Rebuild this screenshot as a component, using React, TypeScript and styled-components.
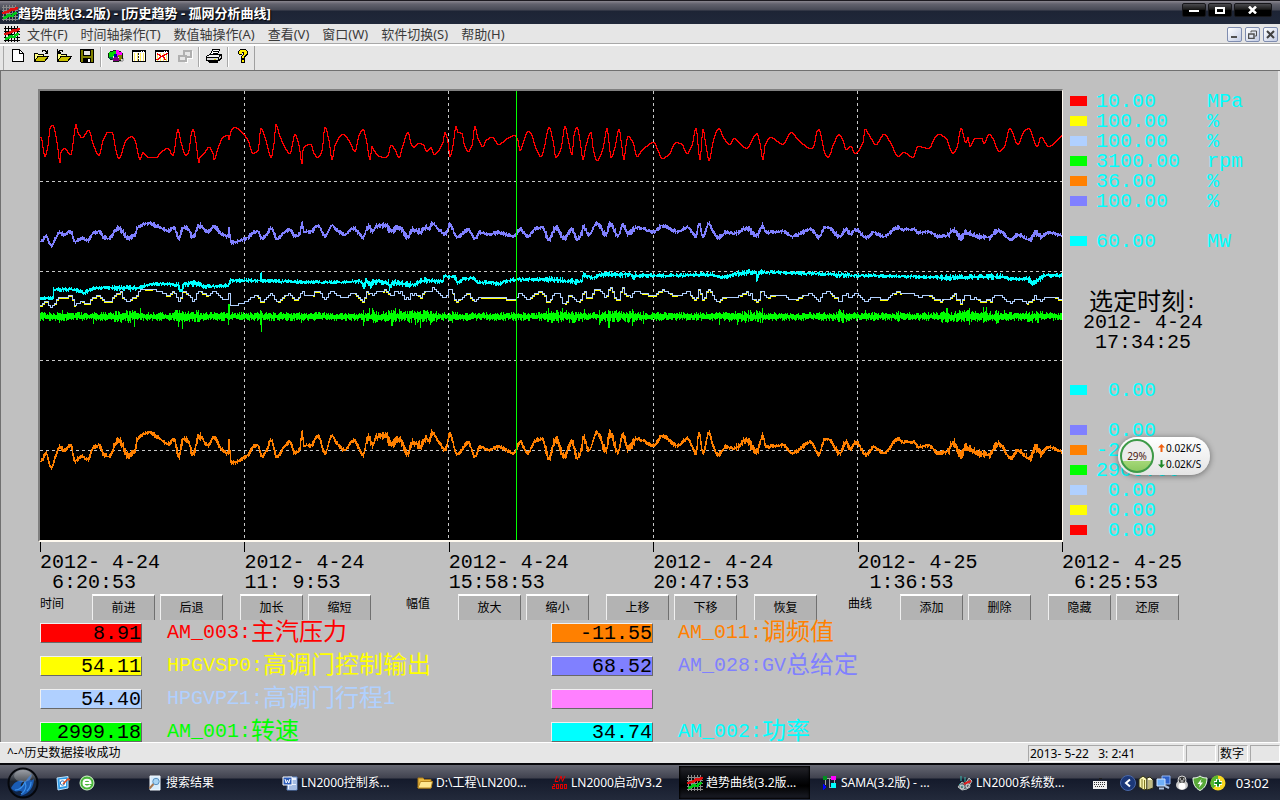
import React from "react";
import styled, { createGlobalStyle, css } from "styled-components";

const GlobalStyle = createGlobalStyle`
  *, *::before, *::after { box-sizing: border-box; }
  html, body { margin: 0; padding: 0; }
  body { background: #c0c0c0; }
  button { font: inherit; color: inherit; padding: 0; margin: 0; border: 0; background: none; }
`;

const uiFont = `"Noto Sans", "Noto Sans CJK SC", sans-serif`;
const dataFont = `"Liberation Mono", "Noto Sans CJK SC", monospace`;

/* ---------- trend data: x, y pairs in plot pixels ---------- */

const PLOT_W = 1022;
const PLOT_H = 449;
const ORIGIN_X = 40;
const ORIGIN_Y = 91;

const pressure = "40,137 44,156 47,145 49,128 52,125 56,142 59,162 60,152 63,148 70,154 73,135 75,124 77,132 81,137 88,130 92,143 98,155 102,140 107,132 111,132 115,150 118,158 125,140 131,136 134,140 139,159 142,152 147,157 155,157 160,152 167,148 172,155 177,129 180,142 185,155 188,150 190,135 192,129 195,142 198,162 199,157 203,153 208,147 212,153 213,159 217,148 222,137 227,135 228,139 230,131 234,127 240,131 247,140 252,153 257,150 260,128 264,137 267,148 270,157 273,143 275,124 278,133 283,145 289,153 294,134 298,145 301,163 302,150 305,145 310,144 313,153 317,157 321,150 324,127 328,140 331,159 334,145 342,134 348,140 354,151 358,135 362,129 365,138 369,159 371,146 373,150 379,156 385,157 387,155 390,145 394,149 398,157 402,145 407,132 410,143 413,147 417,143 422,144 426,151 430,147 433,154 442,142 444,132 447,142 449,156 452,145 455,126 457,132 461,133 463,143 467,151 471,145 474,126 477,138 482,146 485,140 491,137 498,144 505,139 514,135 517,140 519,150 523,140 527,131 530,133 535,148 540,156 543,148 548,127 552,140 555,157 560,148 564,126 567,138 571,154 573,135 576,127 579,140 582,159 585,145 590,132 592,147 596,160 602,148 606,128 608,142 610,157 614,147 618,129 621,147 623,159 625,145 627,136 632,142 636,156 641,150 653,142 657,150 661,158 668,154 675,142 681,144 686,153 691,145 695,128 699,159 702,129 705,145 708,160 712,142 715,132 718,128 722,136 729,144 733,138 740,144 746,148 752,138 756,133 759,143 762,159 764,145 770,137 782,144 790,132 797,139 810,148 813,145 816,131 818,129 821,140 824,153 827,157 833,143 838,134 842,140 845,149 850,146 854,153 862,142 864,129 870,138 875,144 883,134 890,143 897,156 903,152 912,157 917,146 928,148 934,137 938,134 945,138 952,153 956,147 960,128 965,142 967,137 969,146 974,138 981,138 983,143 988,134 992,138 998,151 1003,147 1009,128 1017,144 1023,131 1028,128 1036,146 1040,137 1048,146 1057,139 1062,135";

const setpoint = "40,241 45,236 50,245 55,237 59,232 63,234 70,231 74,241 80,238 87,240 92,233 98,231 103,237 109,238 113,232 118,228 127,237 133,235 137,227 147,223 157,226 167,230 173,227 178,238 182,227 187,228 192,237 198,225 207,231 213,226 220,233 227,236 228,228 230,242 247,237 252,232 257,231 261,238 265,235 270,228 276,238 283,232 289,229 294,236 299,233 301,223 303,231 310,231 317,225 324,236 331,225 335,229 343,234 353,228 362,237 367,226 372,231 375,226 385,225 390,231 398,227 407,236 411,229 420,231 425,227 429,228 431,223 437,228 444,234 449,224 456,237 462,233 467,229 474,238 479,232 487,234 498,232 513,236 519,229 527,236 533,229 541,227 548,239 555,227 563,238 571,229 576,239 581,233 582,226 588,234 596,223 605,234 609,223 617,235 622,224 627,233 636,227 653,231 661,225 676,231 687,227 695,236 698,223 702,236 708,223 712,231 717,237 725,232 733,233 745,228 756,235 762,225 765,232 782,231 791,236 810,229 818,237 823,228 827,227 839,236 845,229 850,233 855,229 865,237 873,232 883,236 897,227 902,229 912,229 918,232 928,231 937,236 947,235 952,229 960,237 965,232 973,235 987,237 998,230 1010,239 1017,234 1027,239 1030,239 1034,232 1040,236 1047,232 1062,235";

const power = "40,298 52,297 53,289 73,289 82,292 93,288 110,287 133,288 145,285 157,283 177,285 180,291 183,284 197,283 203,286 227,285 230,280 259,280 260,273 261,280 290,281 330,282 360,281 363,287 365,281 370,285 373,281 387,282 389,287 391,282 413,284 423,280 442,281 443,276 453,276 457,282 463,278 472,278 477,282 492,282 498,284 503,281 520,279 547,279 570,281 581,281 582,275 593,277 598,274 630,274 632,278 634,275 670,275 710,274 722,277 737,273 755,272 756,278 759,272 810,273 857,275 910,276 943,277 1000,276 1012,279 1027,278 1031,282 1040,278 1043,275 1062,275";

/* x, top, bottom of the single excursions of the speed signal */
const speedSpikes: Array<[number, number, number]> = [
  [59, 314, 323], [62, 310, 318], [93, 314, 324], [115, 311, 322], [134, 313, 327], [140, 308, 318],
  [178, 313, 327], [182, 314, 329], [198, 310, 322], [228, 304, 325], [229, 304, 318], [260, 310, 325],
  [261, 311, 332], [301, 313, 323], [363, 312, 326], [369, 308, 318], [372, 308, 320], [391, 310, 326],
  [392, 313, 326], [395, 308, 322], [399, 309, 318], [415, 312, 325], [420, 313, 328], [430, 311, 325],
  [436, 311, 322], [452, 311, 323], [548, 308, 322], [557, 310, 318], [562, 308, 320], [584, 309, 318],
  [599, 310, 325], [608, 311, 328], [609, 311, 328], [632, 309, 326], [643, 311, 324], [719, 312, 325],
  [729, 313, 322], [737, 313, 325], [748, 310, 322], [750, 310, 320], [760, 313, 323], [762, 308, 316],
  [839, 309, 322], [843, 311, 323], [865, 310, 318], [898, 311, 322], [946, 308, 322], [947, 308, 320],
  [969, 308, 325], [983, 307, 320], [986, 307, 322], [996, 311, 324], [998, 311, 323], [1004, 310, 318], [1032, 311, 322],
];

const noisyZones: Array<[number, number]> = [
  [113, 136], [175, 200], [363, 432], [545, 585], [600, 635], [735, 762], [836, 848], [940, 1000], [1026, 1042],
];

const inZone = (x: number) => noisyZones.some(([a, b]) => x >= a && x <= b);

const hash = (n: number) => {
  const s = Math.sin(n * 127.1 + 311.7) * 43758.5453;
  return s - Math.floor(s);
};

type Point = [number, number];

const parse = (text: string): Point[] =>
  text.split(" ").map((pair) => pair.split(",").map(Number) as Point);

/* monotone cubic interpolation, one value per plot column */
const sample = (points: Point[]): number[] => {
  const n = points.length;
  const slope = points.slice(1).map((p, i) => (p[1] - points[i][1]) / (p[0] - points[i][0]));
  const tangent = points.map((_, i) => {
    if (i === 0 || i === n - 1) return 0;
    const a = slope[i - 1];
    const b = slope[i];
    return a * b <= 0 ? 0 : (2 * a * b) / (a + b);
  });
  const out: number[] = [];
  let i = 0;
  for (let x = 0; x <= PLOT_W; x++) {
    const ax = x + ORIGIN_X;
    while (i < n - 2 && points[i + 1][0] < ax) i++;
    const [x0, y0] = points[i];
    const [x1, y1] = points[i + 1];
    const h = x1 - x0;
    const t = Math.min(1, (ax - x0) / h);
    const t2 = t * t;
    const t3 = t2 * t;
    out.push(
      y0 * (2 * t3 - 3 * t2 + 1) +
        tangent[i] * h * (t3 - 2 * t2 + t) +
        y1 * (3 * t2 - 2 * t3) +
        tangent[i + 1] * h * (t3 - t2) -
        ORIGIN_Y
    );
  }
  return out;
};

/* horizontal run per pixel joined by vertical risers */
const toStepPath = (ys: number[]) => {
  let d = "";
  let last = NaN;
  ys.forEach((raw, x) => {
    const y = Math.round(raw);
    if (x === 0) d += `M0 ${y + 0.5}`;
    else if (y !== last) d += `H${x + 0.5}V${y + 0.5}`;
    last = y;
  });
  return `${d}H${PLOT_W}`;
};

/* one vertical bar per column, reaching back to the column before it */
const toBarPath = (ys: number[], seed: number, quiet: number, loud: number) => {
  let d = "";
  for (let x = 0; x < PLOT_W; x++) {
    const spread = inZone(x + ORIGIN_X) ? loud : quiet;
    const prev = ys[Math.max(0, x - 1)];
    const top = Math.round(Math.min(ys[x], prev) - hash(x + seed) * spread);
    const bottom = Math.round(Math.max(ys[x], prev) + 1 + hash(x * 2 + seed) * spread);
    d += `M${x + 0.5} ${top}V${bottom}`;
  }
  return d;
};

const jitter = (ys: number[], seed: number, quiet: number, loud: number) =>
  ys.map((y, x) => y + (hash(x + seed) - 0.5) * (inZone(x + ORIGIN_X) ? loud : quiet));

const quantise = (ys: number[], step: number, run: number) =>
  ys.map((_, x) => Math.round(ys[Math.floor(x / run) * run] / step) * step);

const pressurePath = toStepPath(sample(parse(pressure)));
const base = sample(parse(setpoint));
const setpointPath = toBarPath(base, 17, 2, 3);
const freqPath = toBarPath(base.map((y) => 341 + (y - 132) * 1.6), 17, 2, 4);
const valve = quantise(jitter(base.map((y) => 197 + (y - 132) * 0.9), 31, 0, 4), 2, 2);
const valvePosPath = toStepPath(valve);
const valveOutPath = toStepPath(valve.map((y, x) => y + (hash(Math.floor(x / 7)) > 0.6 ? 1 : 0)));
const powerPath = toBarPath(sample(parse(power)), 41, 2, 3);

const speedPath = (() => {
  let d = "";
  for (let x = 0; x < PLOT_W; x++) {
    const amp = inZone(x + ORIGIN_X) ? 5 : 3;
    const top = Math.round(225 - 1 - hash(x * 2 + 5) * amp);
    const bottom = Math.round(225 + 2 + hash(x * 3 + 9) * amp);
    d += `M${x + 0.5} ${top}V${bottom}`;
  }
  speedSpikes.forEach(([x, a, b]) => {
    d += `M${x - ORIGIN_X + 0.5} ${a - ORIGIN_Y}V${b - ORIGIN_Y}`;
  });
  return d;
})();

/* ---------- window frame ---------- */

const Screen = styled.div`
  display: flex;
  flex-direction: column;
  height: 100vh;
  overflow: hidden;
  font: 12px/16px ${uiFont};
  color: #000;
  background: #e6e6e6;
`;

const TitleBar = styled.header`
  display: flex;
  align-items: center;
  height: 24px;
  padding: 0 8px 0 2px;
  border-top: 1px solid #1c1a20;
  background: linear-gradient(#8a8790 0, #62626d 3px, #474955 9px, #1d2435 10px, #20283a 100%);
  color: #fff;
`;

const Title = styled.h1`
  flex: 1;
  margin: 0;
  font: bold 13px/20px ${uiFont};
  text-shadow: 1px 1px 1px #000;
`;

const CaptionGroup = styled.div`
  display: flex;
  align-self: flex-start;
  gap: 2px;
  padding-top: 2px;
`;

const CaptionButton = styled.button<{ $wide?: boolean }>`
  display: flex;
  align-items: center;
  justify-content: center;
  width: ${(p) => (p.$wide ? 38 : 24)}px;
  height: 14px;
  border: 1px solid #16161a;
  border-radius: 2px;
  background: linear-gradient(#4a4a4e, #1a1a1a 45%, #000 50%);
`;

const MenuBar = styled.nav`
  display: flex;
  align-items: center;
  height: 20px;
  padding: 0 2px 0 4px;
  color: #3a3a3a;
`;

const MenuList = styled.div`
  display: flex;
  flex: 1;
  gap: 13px;
  padding-left: 7px;
  font-size: 13px;
`;

const MenuItem = styled.button`
  white-space: nowrap;
`;

const MdiGroup = styled.div`
  display: flex;
  gap: 3px;
`;

const MdiButton = styled.button`
  display: flex;
  align-items: center;
  justify-content: center;
  width: 15px;
  height: 15px;
  border: 1px solid #7f8db0;
  border-radius: 2px;
  background: linear-gradient(135deg, #fff, #c3cce4);
`;

const ToolBar = styled.div`
  display: flex;
  align-items: center;
  height: 26px;
  border-top: 2px solid #fff;
  box-shadow: 0 -1px 0 #a8a8a8;
`;

const ToolStrip = styled.div`
  display: flex;
  align-items: flex-start;
  height: 24px;
  margin-left: 3px;
  padding-left: 2px;
  border-left: 1px solid #a8a8a8;
  border-right: 1px solid #a0a0a0;
`;

const ToolButton = styled.button`
  display: flex;
  align-items: center;
  justify-content: center;
  width: 23px;
  height: 20px;
`;

const ToolSeparator = styled.span`
  width: 2px;
  height: 20px;
  margin: 1px 2px;
  border-left: 1px solid #a8a8a8;
  border-right: 1px solid #fff;
`;

/* ---------- workspace ---------- */

const Workspace = styled.main`
  flex: 1;
  min-height: 0;
  overflow: hidden;
  border: solid #707070;
  border-width: 1px 0 0 1px;
  box-shadow: inset -2px 0 0 #e6e6e6;
  background: #c0c0c0;
`;

const TrendRow = styled.div`
  display: grid;
  grid-template-columns: minmax(0, 1fr) 217px;
  padding: 18px 0 0 37px;
`;

const Plot = styled.div`
  border: solid;
  border-width: 2px 1px 2px 2px;
  border-color: #808080 #fffaf0 #fffaf0 #808080;
  background: #000;
`;

const PlotSvg = styled.svg`
  display: block;
  width: 100%;
  height: 449px;
  fill: none;
  shape-rendering: crispEdges;
  path, line { vector-effect: non-scaling-stroke; }
`;

const SidePanel = styled.aside`
  position: relative;
  display: flex;
  flex-direction: column;
  justify-content: space-between;
  padding: 2px 0;
  font: 20px/20px ${dataFont};
`;

const Scale = styled.div`
  display: grid;
  grid-auto-rows: 20px;
  color: #00ffff;
`;

const ScaleRow = styled.div`
  display: grid;
  grid-template-columns: 17px 102px 1fr;
  column-gap: 9px;
  align-items: start;
  padding-left: 7px;
  white-space: pre;
`;

const ScaleText = styled.span`
  padding-top: 1px;
`;

const Swatch = styled.span<{ $color: string }>`
  height: 10px;
  margin-top: 5px;
  background: ${(p) => p.$color};
`;

const Moment = styled.div`
  width: 160px;
  padding-top: 14px;
  text-align: center;
  white-space: pre;
`;

const Cjk = styled.span`
  font-family: "Noto Sans CJK SC", sans-serif;
  font-size: 24px;
  line-height: 1px;
  vertical-align: -2px;
`;

const TimeAxis = styled.div`
  display: grid;
  grid-template-columns: repeat(5, minmax(0, 1fr)) 218px;
  padding-left: 39px;
  font: 20px/20px ${dataFont};
`;

const TimeMark = styled.div`
  white-space: pre;
  &::before {
    content: "";
    display: block;
    width: 1px;
    height: 10px;
    margin-bottom: 1px;
    background: #000;
  }
`;

const Controls = styled.div`
  display: grid;
  grid-template-columns: 366px 442px 1fr;
  padding: 1px 0 0 39px;
`;

const ControlGroup = styled.div`
  display: flex;
  gap: 17px;
`;

const ControlSet = styled.div`
  display: flex;
`;

const ControlLabel = styled.span`
  width: 52px;
  line-height: 20px;
`;

const ButtonPair = styled.div`
  display: flex;
  gap: 5px;
`;

const PushButton = styled.button`
  width: 63px;
  height: 26px;
  border: solid;
  border-width: 2px 1px 0 1px;
  border-color: #fff #707070 #b3b3b3 #f0f0f0;
  background: #b3b3b3;
`;

const Readouts = styled.div`
  display: grid;
  grid-template-columns: 511px 1fr;
  grid-auto-rows: 20px;
  row-gap: 13px;
  padding: 3px 0 0 39px;
  font: 20px/20px ${dataFont};
`;

const Readout = styled.div`
  display: grid;
  grid-template-columns: 102px 1fr;
  column-gap: 25px;
  white-space: nowrap;
`;

const ReadoutValue = styled.output<{ $color: string }>`
  height: 20px;
  border: 1px solid;
  border-color: #f0f0f0 #686868 #686868 #f0f0f0;
  background: ${(p) => p.$color};
  line-height: 20px;
  text-align: right;
`;

const ReadoutName = styled.span<{ $color: string }>`
  color: ${(p) => p.$color};
`;

/* ---------- traffic widget ---------- */

const Traffic = styled.div`
  position: absolute;
  top: 348px;
  left: 55px;
  display: flex;
  align-items: center;
  gap: 4px;
  width: 92px;
  height: 38px;
  padding-left: 2px;
  border-radius: 19px;
  background: linear-gradient(#fff, #e4e4e4);
  box-shadow: 0 1px 6px rgba(0, 0, 0, 0.45);
  font: 10px/16px ${uiFont};
`;

const Gauge = styled.div`
  display: flex;
  align-items: center;
  justify-content: center;
  width: 34px;
  height: 34px;
  border: 2px solid #3d9a47;
  border-radius: 50%;
  background: linear-gradient(#ececec 65%, #a5d878 66%, #8cc860);
  color: #4a2010;
`;

const Rate = styled.div`
  display: flex;
  align-items: center;
  gap: 1px;
  white-space: nowrap;
`;

/* ---------- status bar and taskbar ---------- */

const StatusBar = styled.footer`
  display: flex;
  align-items: center;
  gap: 2px;
  height: 21px;
  padding-left: 7px;
  border-top: 1px solid #fff;
  background: #e6e6e6;
`;

const StatusText = styled.span`
  flex: 1;
`;

const StatusCell = styled.span<{ $w: number }>`
  width: ${(p) => p.$w}px;
  height: 17px;
  padding-left: 1px;
  border: solid;
  border-width: 1px;
  border-color: #a8a8a8 #fff #fff #a8a8a8;
  line-height: 15px;
  white-space: pre;
`;

const TaskBar = styled.div`
  display: flex;
  align-items: center;
  height: 37px;
  padding-left: 7px;
  border-top: 2px solid #08080c;
  background: linear-gradient(#666873 0, #40424f 13px, #141a2b 14px, #232a3b 100%);
  color: #fff;
`;

const IconButton = styled.button`
  display: flex;
  align-items: center;
  justify-content: center;
`;

const QuickLaunch = styled.div`
  display: flex;
  gap: 8px;
  width: 100px;
  padding-left: 16px;
`;

const Tasks = styled.div`
  display: flex;
  flex: 1;
  min-width: 0;
  gap: 4px;
`;

const Task = styled.button<{ $active?: boolean }>`
  display: flex;
  align-items: center;
  gap: 3px;
  flex: 0 1 131px;
  min-width: 0;
  height: 33px;
  padding-left: 8px;
  white-space: nowrap;
  ${(p) =>
    p.$active &&
    css`
      background: linear-gradient(#25252b, #08090d 40%, #000 60%, #1d1f29);
      box-shadow: inset 0 0 2px 1px #000;
    `}
`;

const Tray = styled.div`
  display: flex;
  align-items: center;
  gap: 2px;
  padding-right: 11px;
`;

const TrayIcons = styled.div`
  display: flex;
  gap: 2px;
  margin-left: 10px;
`;

const Clock = styled.time`
  margin-left: 8px;
  font-size: 13px;
`;

/* ---------- icons ---------- */

const IconSvg = styled.svg`
  flex-shrink: 0;
`;

const Svg = ({ children }: { children: React.ReactNode }) => (
  <IconSvg width="16" height="16" viewBox="0 0 16 16" shapeRendering="crispEdges" fill="none" aria-hidden="true">
    {children}
  </IconSvg>
);

const Smooth = ({ children }: { children: React.ReactNode }) => (
  <IconSvg width="16" height="16" viewBox="0 0 16 16" fill="none" aria-hidden="true">
    {children}
  </IconSvg>
);

const TrendIcon = ({ dark }: { dark?: boolean }) => (
  <Svg>
    <path
      d="M1.5 0V16M4.5 0V16M7.5 0V16M10.5 0V16M13.5 0V16M0 2.5H16M0 5.5H16M0 8.5H16M0 11.5H16M0 14.5H16"
      stroke={dark ? "#000" : "#8a8a8a"}
    />
    <path d="M0 7.5H3V6.5H6V5.5H8V4.5H9V3.5H11V4.5H12V3.5H14V2.5H16" stroke="#e01010" strokeWidth="2" />
    <path d="M1 12.5H3V11.5H5V10.5H6V9.5H8V10.5H11V8.5H13V7.5H15" stroke="#00c818" strokeWidth="2" />
  </Svg>
);

const NewIcon = () => (
  <Svg>
    <path d="M2.5 1.5H9.5L13.5 5.5V13.5H2.5Z" fill="#fff" stroke="#000" />
    <path d="M9.5 1.5V5.5H13.5" stroke="#000" />
  </Svg>
);

const OpenIcon = ({ back }: { back?: boolean }) => (
  <Svg>
    <path d="M1.5 13.5V5.5H4.5L5.5 6.5H10.5V8.5" fill="#ffff80" stroke="#000" />
    <path d="M1.5 13.5L5 8.5H15.5L11.5 13.5Z" fill="#c8c000" stroke="#000" />
    {back ? (
      <path d="M7 3.5L6 2.5H4L2 4.5M1.5 1V4.5H5" stroke="#000" />
    ) : (
      <path d="M9 3.5L10 2.5H12L14 4.5M14.5 2V5.5H11.5" stroke="#000" />
    )}
  </Svg>
);

const SaveIcon = () => (
  <Svg>
    <path d="M1.5 1.5H14.5V14.5H2.5L1.5 13.5Z" fill="#808000" stroke="#000" />
    <path d="M4.5 2.5H11.5V7.5H4.5Z" fill="#e6e6e6" stroke="#000" />
    <path d="M4 10H12V14H4Z" fill="#000" />
    <path d="M9 11H11V14H9Z" fill="#fff" />
  </Svg>
);

const PieIcon = () => (
  <Svg>
    <path d="M6 13H13L15 10H16V12L14 14H8Z" fill="#b0b0b0" />
    <path d="M1 4H3V3H5V2H8V8H5V9H1Z" fill="#00d800" />
    <path d="M8 2H11V3H13V4H14V7H10V8H8Z" fill="#ff00ff" />
    <path d="M10 7H15V11H13V12H11V9H10Z" fill="#808000" />
    <path d="M5 13V10H6V8H10V10H11V13Z" fill="#800080" />
    <path d="M1 9H5V12H3V11H1Z" fill="#006848" />
    <path d="M5 2.500H8M2 3.500H5M0.500 5V10M11 3.500H13M14.500 5V11M2 11.500H4M5 13.500H11M11 12.500H13" stroke="#102010" />
    <path d="M6 6H9V9H6Z" fill="#0000a0" />
  </Svg>
);

const SheetIcon = ({ crossed }: { crossed?: boolean }) => (
  <Svg>
    <path d="M1.5 2.5H14.5V13.5H1.5Z" fill="#fff" stroke="#000" />
    <path d="M1 3.5H15" stroke="#000" />
    <path d="M10 3.500H14" stroke="#fff" strokeDasharray="1 1" />
    <path d="M3.5 5V13M6.500 5V13M9.500 5V13M12.5 5V13" stroke="#ffe860" />
    {crossed ? (
      <path d="M2 11.5H4V10.5H5V9.5H6V8.5H8V7.5H10V6.5H12V5.5H14M3.5 5V6.5H5V7.5H6V8.5H9V9.5H10V11.5H12" stroke="#f00000" />
    ) : (
      <path d="M7.500 5V13" stroke="#202020" strokeDasharray="2 1" />
    )}
  </Svg>
);

const CascadeIcon = () => (
  <Svg>
    <path d="M8 14.500H10.500V10.500H15.500V3" stroke="#fff" />
    <path d="M7 3H14V9H7Z" stroke="#b0b0b0" strokeWidth="2" />
    <path d="M2 8H9V13H2Z" fill="#e6e6e6" stroke="#b0b0b0" strokeWidth="2" />
  </Svg>
);

const PrintIcon = () => (
  <Svg>
    <path d="M4.5 6.5L6.5 1.5H13.5L11.5 6.5" fill="#fff" stroke="#000" />
    <path d="M7 3.5H12M6.5 5.5H11" stroke="#000" />
    <path d="M0.5 8.5L3.5 6.5H14.5L12.5 9.5H0.5Z" fill="#f0f0f0" stroke="#000" />
    <path d="M0.500 9.5H12.5V12.5H0.500ZM12.5 9.5L15 7V10.5L12.5 13" fill="#d8d8d8" stroke="#000" />
    <path d="M2.5 13.5H11.5V14.5H3.5Z" fill="#fff" stroke="#000" />
    <path d="M8 11.5H10" stroke="#e0d000" />
  </Svg>
);

const HelpIcon = () => (
  <Svg>
    <path d="M3 3H4V2H5V1H11V2H12V3H13V7H12V8H11V9H10V11H6V8H7V7H8V5H7V7H4V6H3Z" fill="#000" />
    <path d="M4 3H5V2H11V3H12V6H11V7H10V8H9V10H7V8H8V7H9V4H7V6H4Z" fill="#ffee00" />
    <path d="M6 11H10V15H6Z" fill="#000" />
    <path d="M7 12H9V14H7Z" fill="#ffee00" />
  </Svg>
);

const OrbIcon = () => (
  <svg width="32" height="32" viewBox="0 0 32 32" aria-hidden="true">
    <defs>
      <linearGradient id="orb" x1="0" y1="0" x2="0" y2="1">
        <stop offset="0" stopColor="#8a8f98" />
        <stop offset="0.45" stopColor="#20262f" />
        <stop offset="1" stopColor="#0a2450" />
      </linearGradient>
    </defs>
    <circle cx="16" cy="16" r="14.5" fill="url(#orb)" stroke="#05070c" strokeWidth="2" />
    <path d="M4 21C7 15 12 12 17 14C14 16 13 18 14 20C17 17 20 11 25 7C22 13 23 15 27 12C27 19 23 27 13 29C16 26 16 24 12 24C9 25 6 24 4 21Z" fill="#1a5cb4" />
    <path d="M8 23C13 23 16 20 18 15C20 20 18 25 14 27M20 24C23 21 24 18 24 15" fill="none" stroke="#3c90e8" strokeWidth="1.2" />
    <ellipse cx="16" cy="9" rx="9" ry="6" fill="#ffffff" opacity="0.22" />
  </svg>
);

const DesktopIcon = () => (
  <Smooth>
    <path d="M2 3L13 1.500V13L3 15Z" fill="#2f9be8" stroke="#bfe4ff" />
    <path d="M4.500 4.500L11 4V11L5 12Z" fill="#fff" />
    <circle cx="7.500" cy="8" r="2.200" stroke="#2070c0" />
    <path d="M8 9L13 4L15 5" stroke="#e05020" strokeWidth="1.500" />
  </Smooth>
);

const BrowserIcon = () => (
  <Smooth>
    <circle cx="8" cy="8" r="7" fill="#4cb83c" stroke="#d8f8d0" />
    <path d="M4.500 8H11.500C11.500 3.500 4.500 3.500 4.500 8C4.500 12 9.500 12.500 11.200 10" stroke="#fff" strokeWidth="2" />
  </Smooth>
);

const SearchIcon = () => (
  <Smooth>
    <path d="M3 1H13V15H3Z" fill="#d8ecfc" stroke="#f4faff" />
    <circle cx="9" cy="6.500" r="3.200" fill="#a8d4f4" stroke="#5890c0" />
    <path d="M6.500 9L2.500 13.500" stroke="#a87850" strokeWidth="2" />
  </Smooth>
);

const WordIcon = () => (
  <Smooth>
    <path d="M6 2H15V15H5Z" fill="#e8f0ff" stroke="#6088c8" />
    <path d="M10 6H14M10 8H14M7 11H14M7 13H14" stroke="#6088c8" />
    <path d="M1 2H10V10H1Z" fill="#2c5cb8" stroke="#fff" />
    <path d="M3 4L4.200 8L5.500 5L6.800 8L8 4" stroke="#fff" />
  </Smooth>
);

const FolderIcon = () => (
  <Smooth>
    <path d="M1 3H6L7.500 4.500H14V13H1Z" fill="#e8b840" stroke="#a87818" />
    <path d="M1 13L3.500 6.500H15.500L14 13Z" fill="#ffe890" stroke="#b88820" />
  </Smooth>
);

const LnIcon = () => (
  <Smooth>
    <path d="M5 1L3 6.500H6M7 6.500L9 1L10.500 6.500L13 1" stroke="#f00000" />
    <path
      d="M0.500 9.500H2.500V11.500H0.500V13.500H3M4.500 9.500H6.500V13.500H4.500ZM8.500 9.500H10.500V13.500H8.500ZM12.500 9.500H14.500V13.500H12.500Z"
      stroke="#e00000"
      shapeRendering="crispEdges"
    />
  </Smooth>
);

const SamaIcon = () => (
  <Svg>
    <path d="M4 3.500H12M7.500 3V12M7 12.500H13M12.500 4V10M3.500 4V10" stroke="#a0a0a0" />
    <path d="M1 1H5V5H1Z" fill="#009020" />
    <path d="M9 1H14V5H9Z" fill="#ff00ff" />
    <path d="M1 9L5 12L1 15Z" fill="#0000ff" />
    <path d="M9 8H14V13H9Z" fill="#00ffff" />
  </Svg>
);

const DataIcon = () => (
  <Smooth>
    <path d="M1 12L5 7L8 9L12 3L15 6L10 14L5 15Z" fill="#606870" stroke="#b8c0c0" />
    <path d="M4 1V6M8 2V7M2 9L7 13" stroke="#38b8b0" />
    <path d="M7 9L14 6" stroke="#e02020" strokeWidth="2" />
    <circle cx="5" cy="12" r="2" stroke="#e0e0e0" />
    <circle cx="11" cy="11" r="2" stroke="#e0e0e0" />
  </Smooth>
);

const KeyboardIcon = () => (
  <Svg>
    <path d="M1 6H15V14H1Z" fill="#f0f0f0" />
    <path d="M2 7.500H14M2 9.500H14M3 11.500H13" stroke="#303030" strokeDasharray="1 1" />
    <path d="M7.500 5V3.500H10" stroke="#202020" />
  </Svg>
);

const ChevronIcon = () => (
  <Smooth>
    <circle cx="8" cy="8" r="7.500" fill="#1c3878" stroke="#4a68a8" />
    <path d="M10 4.500L6 8L10 11.500" stroke="#fff" strokeWidth="2" />
  </Smooth>
);

const BooksIcon = () => (
  <Smooth>
    <path d="M1 4L5 1L9 4V14L6 15L1 12Z" fill="#f8f4b0" stroke="#303010" />
    <path d="M9 3L12 2L15 5V13L9 15Z" fill="#fffce0" stroke="#303010" />
    <path d="M4 4V13M6.500 5V14M11 5V14M13 5V13" stroke="#807820" />
  </Smooth>
);

const NetworkIcon = () => (
  <Smooth>
    <path d="M6 1H14V9H6Z" fill="#2c60c8" stroke="#90b4f0" />
    <path d="M1 4H9V11H1Z" fill="#70b0f8" stroke="#d0e4ff" />
    <path d="M3 13.500H8M9 11L13 13" stroke="#b0c4e0" strokeWidth="2" />
  </Smooth>
);

const PenguinIcon = () => (
  <Smooth>
    <ellipse cx="8" cy="10" rx="6" ry="5" fill="#c8c8c8" />
    <circle cx="8" cy="5" r="4" fill="#383838" stroke="#d8d8d8" />
    <ellipse cx="8" cy="11" rx="3.500" ry="3.500" fill="#fff" />
    <path d="M5.500 4H7M9 4H10.500M6.500 6H9.500" stroke="#fff" />
  </Smooth>
);

const ShieldIcon = () => (
  <Smooth>
    <path d="M8 1C10 2.500 12 3 15 3C15 9 13 13 8 15.500C3 13 1 9 1 3C4 3 6 2.500 8 1Z" fill="#58a838" stroke="#f0fff0" />
    <path d="M9.500 4L5.500 9H8L7 12.500L11 7.500H8.500Z" fill="#fff" />
  </Smooth>
);

const PlusIcon = () => (
  <Smooth>
    <circle cx="8" cy="8" r="7.500" fill="#f8d820" />
    <path d="M8 0.500A7.500 7.500 0 0 0 3 13.500L8 8Z" fill="#58b830" />
    <path d="M8 4V12M4 8H12" stroke="#fff" strokeWidth="4" />
    <path d="M8 4.500V11.500M4.500 8H11.500" stroke="#108820" strokeWidth="2" />
  </Smooth>
);

const Arrow = ({ up }: { up?: boolean }) => (
  <svg width="7" height="8" viewBox="0 0 7 8" aria-hidden="true">
    <path
      d={up ? "M3.500 0L7 3.500H4.500V8H2.500V3.500H0Z" : "M3.500 8L7 4.500H4.500V0H2.500V4.500H0Z"}
      fill={up ? "#f06010" : "#208828"}
    />
  </svg>
);

/* ---------- content ---------- */

const RED = "#ff0000";
const YELLOW = "#ffff00";
const PALE = "#b0d0ff";
const GREEN = "#00ff00";
const ORANGE = "#ff8000";
const VIOLET = "#8080ff";
const CYAN = "#00ffff";
const PINK = "#ff80ff";

const menus = ["文件(F)", "时间轴操作(T)", "数值轴操作(A)", "查看(V)", "窗口(W)", "软件切换(S)", "帮助(H)"];

const upperScale = [
  [RED, "10.00", "MPa"],
  [YELLOW, "100.00", "%"],
  [PALE, "100.00", "%"],
  [GREEN, "3100.00", "rpm"],
  [ORANGE, "36.00", "%"],
  [VIOLET, "100.00", "%"],
  ["transparent", "", ""],
  [CYAN, "60.00", "MW"],
];

const lowerScale = [
  [CYAN, " 0.00"],
  ["transparent", ""],
  [VIOLET, " 0.00"],
  [ORANGE, "-24.00"],
  [GREEN, "2900.00"],
  [PALE, " 0.00"],
  [YELLOW, " 0.00"],
  [RED, " 0.00"],
];

const timeMarks = [
  ["2012- 4-24", " 6:20:53"],
  ["2012- 4-24", "11: 9:53"],
  ["2012- 4-24", "15:58:53"],
  ["2012- 4-24", "20:47:53"],
  ["2012- 4-25", " 1:36:53"],
  ["2012- 4-25", " 6:25:53"],
];

const controls = [
  { label: "时间", pairs: [["前进", "后退"], ["加长", "缩短"]] },
  { label: "幅值", pairs: [["放大", "缩小"], ["上移", "下移"], ["恢复"]] },
  { label: "曲线", pairs: [["添加", "删除"], ["隐藏", "还原"]] },
];

const readouts: Array<{ color: string; value: string; tag: string; name: string; tail?: string }> = [
  { color: RED, value: "8.91", tag: "AM_003:", name: "主汽压力" },
  { color: ORANGE, value: "-11.55", tag: "AM_011:", name: "调频值" },
  { color: YELLOW, value: "54.11", tag: "HPGVSP0:", name: "高调门控制输出" },
  { color: VIOLET, value: "68.52", tag: "AM_028:GV", name: "总给定" },
  { color: PALE, value: "54.40", tag: "HPGVPZ1:", name: "高调门行程", tail: "1" },
  { color: PINK, value: "", tag: "", name: "" },
  { color: GREEN, value: "2999.18", tag: "AM_001:", name: "转速" },
  { color: CYAN, value: "34.74", tag: "AM_002:", name: "功率" },
];

const tasks = [
  { icon: <SearchIcon />, text: "搜索结果" },
  { icon: <WordIcon />, text: "LN2000控制系..." },
  { icon: <FolderIcon />, text: "D:\\工程\\LN200..." },
  { icon: <LnIcon />, text: "LN2000启动V3.2" },
  { icon: <TrendIcon />, text: "趋势曲线(3.2版...", active: true },
  { icon: <SamaIcon />, text: "SAMA(3.2版) - ..." },
  { icon: <DataIcon />, text: "LN2000系统数..." },
];

const TrendPlot = () => (
  <PlotSvg viewBox={`0 0 ${PLOT_W} ${PLOT_H}`} preserveAspectRatio="none" role="img" aria-label="历史趋势">
    <g stroke="#c8c8c8" strokeDasharray="3 3">
      {[90, 180, 269, 359].map((y) => (
        <line key={y} x1="0" x2={PLOT_W} y1={y + 0.5} y2={y + 0.5} />
      ))}
      {[204, 408, 613, 817].map((x) => (
        <line key={x} x1={x + 0.5} x2={x + 0.5} y1="0" y2={PLOT_H} />
      ))}
    </g>
    <path d={pressurePath} stroke={RED} />
    <path d={valveOutPath} stroke={YELLOW} />
    <path d={valvePosPath} stroke={PALE} />
    <path d={speedPath} stroke={GREEN} />
    <path d={freqPath} stroke={ORANGE} />
    <path d={setpointPath} stroke={VIOLET} />
    <path d={powerPath} stroke={CYAN} />
    <line x1="476.5" x2="476.5" y1="0" y2={PLOT_H} stroke={GREEN} />
  </PlotSvg>
);

export default function App() {
  return (
    <Screen>
      <GlobalStyle />
      <TitleBar>
        <TrendIcon />
        <Title>趋势曲线(3.2版) - [历史趋势 - 孤网分析曲线]</Title>
        <CaptionGroup>
          <CaptionButton aria-label="最小化">
            <svg width="10" height="8"><path d="M0 4H10V6H0Z" fill="#fff" /></svg>
          </CaptionButton>
          <CaptionButton aria-label="最大化">
            <svg width="10" height="8"><path d="M1 2H9V7H1Z" fill="none" stroke="#fff" strokeWidth="2" /></svg>
          </CaptionButton>
          <CaptionButton $wide aria-label="关闭">
            <svg width="10" height="8"><path d="M1 0.500L8 7.500M8 0.500L1 7.500" stroke="#fff" strokeWidth="2.500" /></svg>
          </CaptionButton>
        </CaptionGroup>
      </TitleBar>

      <MenuBar>
        <TrendIcon dark />
        <MenuList>
          {menus.map((m) => (
            <MenuItem key={m}>{m}</MenuItem>
          ))}
        </MenuList>
        <MdiGroup>
          <MdiButton aria-label="最小化">
            <svg width="9" height="9"><path d="M1 6H7V8H1Z" fill="#505050" /></svg>
          </MdiButton>
          <MdiButton aria-label="还原">
            <svg width="9" height="9" fill="none" stroke="#505050"><path d="M3 2.500V1H8.500V6H7" /><path d="M0.500 4H6V8.500H0.500Z" strokeWidth="1.500" /></svg>
          </MdiButton>
          <MdiButton aria-label="关闭">
            <svg width="9" height="9"><path d="M1 1L8 8M8 1L1 8" stroke="#404040" strokeWidth="2" /></svg>
          </MdiButton>
        </MdiGroup>
      </MenuBar>

      <ToolBar>
        <ToolStrip>
          <ToolButton aria-label="新建"><NewIcon /></ToolButton>
          <ToolButton aria-label="打开"><OpenIcon /></ToolButton>
          <ToolButton aria-label="导入"><OpenIcon back /></ToolButton>
          <ToolButton aria-label="保存"><SaveIcon /></ToolButton>
          <ToolSeparator />
          <ToolButton aria-label="颜色"><PieIcon /></ToolButton>
          <ToolButton aria-label="显示"><SheetIcon /></ToolButton>
          <ToolButton aria-label="清除"><SheetIcon crossed /></ToolButton>
          <ToolButton aria-label="层叠" disabled><CascadeIcon /></ToolButton>
          <ToolSeparator />
          <ToolButton aria-label="打印"><PrintIcon /></ToolButton>
          <ToolSeparator />
          <ToolButton aria-label="帮助"><HelpIcon /></ToolButton>
        </ToolStrip>
      </ToolBar>

      <Workspace>
        <TrendRow>
          <Plot>
            <TrendPlot />
          </Plot>
          <SidePanel>
            <Scale>
              {upperScale.map(([color, value, unit], i) => (
                <ScaleRow key={i}>
                  <Swatch $color={color} />
                  <ScaleText>{value}</ScaleText>
                  <ScaleText>{unit}</ScaleText>
                </ScaleRow>
              ))}
            </Scale>
            <Moment>
              <Cjk>选定时刻</Cjk>:{"\n2012- 4-24\n17:34:25"}
            </Moment>
            <Scale>
              {lowerScale.map(([color, value], i) => (
                <ScaleRow key={i}>
                  <Swatch $color={color} />
                  <ScaleText>{value}</ScaleText>
                </ScaleRow>
              ))}
            </Scale>
            <Traffic>
              <Gauge>29%</Gauge>
              <div>
                <Rate><Arrow up />0.02K/S</Rate>
                <Rate><Arrow />0.02K/S</Rate>
              </div>
            </Traffic>
          </SidePanel>
        </TrendRow>

        <TimeAxis>
          {timeMarks.map(([date, time], i) => (
            <TimeMark key={i}>{`${date}\n${time}`}</TimeMark>
          ))}
        </TimeAxis>

        <Controls>
          {controls.map((group) => (
            <ControlSet key={group.label}>
              <ControlLabel>{group.label}</ControlLabel>
              <ControlGroup>
                {group.pairs.map((pair) => (
                  <ButtonPair key={pair[0]}>
                    {pair.map((b) => (
                      <PushButton key={b}>{b}</PushButton>
                    ))}
                  </ButtonPair>
                ))}
              </ControlGroup>
            </ControlSet>
          ))}
        </Controls>

        <Readouts>
          {readouts.map((r) => (
            <Readout key={r.color}>
              <ReadoutValue $color={r.color}>{r.value}</ReadoutValue>
              <ReadoutName $color={r.color}>
                {r.tag}
                <Cjk>{r.name}</Cjk>
                {r.tail}
              </ReadoutName>
            </Readout>
          ))}
        </Readouts>
      </Workspace>

      <StatusBar>
        <StatusText>^-^历史数据接收成功</StatusText>
        <StatusCell $w={156}>2013- 5-22   3: 2:41</StatusCell>
        <StatusCell $w={30} />
        <StatusCell $w={30}>数字</StatusCell>
        <StatusCell $w={30} />
      </StatusBar>

      <TaskBar>
        <IconButton aria-label="开始"><OrbIcon /></IconButton>
        <QuickLaunch>
          <IconButton aria-label="显示桌面"><DesktopIcon /></IconButton>
          <IconButton aria-label="浏览器"><BrowserIcon /></IconButton>
        </QuickLaunch>
        <Tasks>
          {tasks.map((t) => (
            <Task key={t.text} $active={t.active}>
              {t.icon}
              {t.text}
            </Task>
          ))}
        </Tasks>
        <Tray>
          <KeyboardIcon />
          <TrayIcons>
            <ChevronIcon />
            <BooksIcon />
            <NetworkIcon />
            <PenguinIcon />
            <ShieldIcon />
            <PlusIcon />
          </TrayIcons>
          <Clock>03:02</Clock>
        </Tray>
      </TaskBar>
    </Screen>
  );
}
